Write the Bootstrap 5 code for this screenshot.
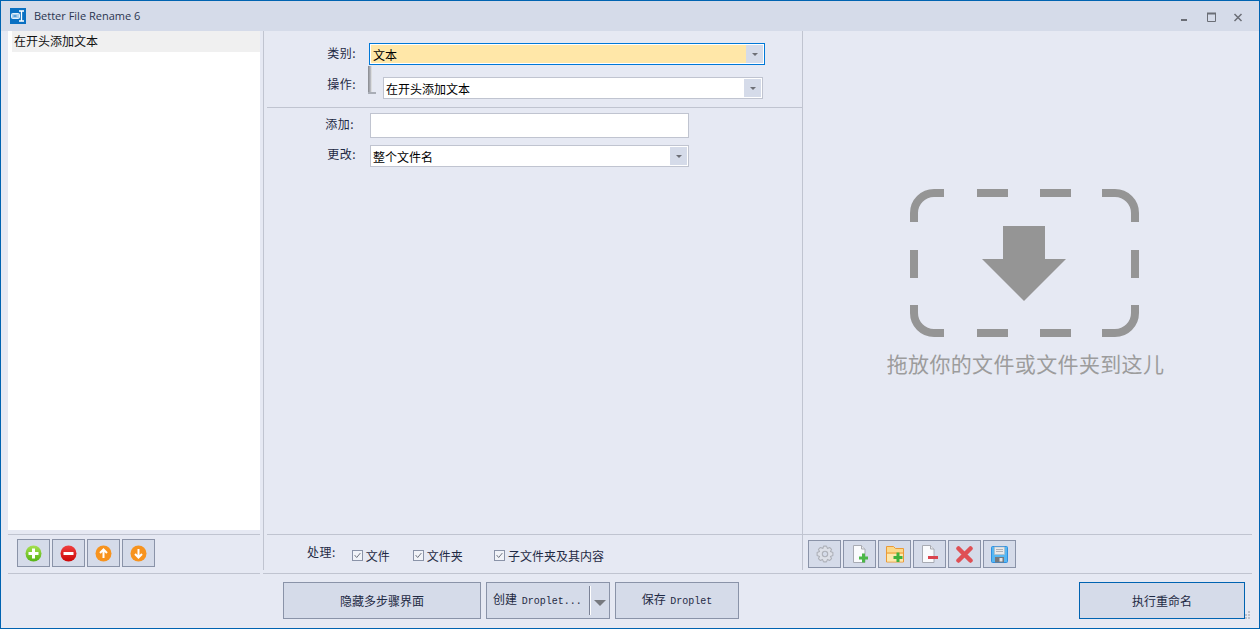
<!DOCTYPE html>
<html lang="zh-CN">
<head>
<meta charset="utf-8">
<title>Better File Rename 6</title>
<link rel="stylesheet" href="https://cdn.jsdelivr.net/npm/bootstrap@5.3.0/dist/css/bootstrap.min.css">
<style>
html,body{height:100%;margin:0;overflow:hidden;background:#e6e9f3}
body{font-family:"Noto Sans CJK SC","Liberation Sans",sans-serif;font-size:12px;line-height:16px;color:#1f2a44}
.win{height:629px;border:1px solid #0063b1;background:#e6e9f3}
.ttl{height:30px;background:#d5dbe9;flex:none}
.ttl-logo{margin-left:9px;display:block}
.ttl-name{margin-left:8px;font-family:"Open Sans","Liberation Sans",sans-serif;font-size:11px;color:#2b3550;margin-top:-1px}
.wctl{margin-right:16px;margin-top:4px}
.work{height:543px;flex:none}
.lp{width:252px;margin-left:7px;flex:none}
.fl{height:499px;background:#fff;padding-left:4px;color:#111}
.fl-sel{height:21px;background:#f0f0f0;padding-left:2px;padding-top:2px}
.hr-a{height:1px;background:#c0c4d0;flex:none}
.gapline{margin-top:4px}
.lbar{margin:4px 0 0 9px;gap:2px;height:28px}
.lp-end{margin-top:6px}
.rw{margin-left:3px;flex:1 1 auto;min-width:0}
.mid{width:540px;height:539px;border-left:1px solid #c0c4d0;border-right:1px solid #c0c4d0;padding-left:3px;flex:none}
.rp{flex:1 1 auto;height:539px;margin-right:7px}
.fr{display:flex;align-items:flex-start}
.flbl{width:89px;text-align:right;flex:none;padding-right:0;letter-spacing:.5px}
.cb{background:#fff;border:1px solid #c0c4d0;flex:none;position:relative;color:#000;padding:3px 0 0 2px;display:block}
.cb-arrow{position:absolute;top:1px;right:1px;bottom:1px;width:17px;background:#d5dbe9;display:flex;align-items:center;justify-content:center}
.cb-arrow i{display:block;width:0;height:0;border-left:3px solid transparent;border-right:3px solid transparent;border-top:3px solid #6d6f76;margin-top:1px}
.r1{margin-top:12px}.r1 .flbl{margin-top:2px}
.sel-cat{width:396px;height:22px;margin-left:13px;border-color:#0078d7;background:#fff;padding:0}
.sel-cat .fill{display:block;height:18px;margin:1px 18px 1px 1px;background:#ffe7a8;padding:2px 0 0 2px}
.r2{margin-top:12px}.r2 .flbl{margin-top:-1px}
.conn{width:8px;height:28px;margin:-11px 7px 0 12px;flex:none;border-bottom:2px solid #a9adb6;position:relative}
.conn::before{content:"";display:block;width:4px;height:100%;background:linear-gradient(90deg,#85878d,#b5b7bd 60%,#eceded)}
.sel-op{width:380px;height:22px}
.sep-in{margin-top:8px}
.r3{margin-top:5px}.r3 .flbl{margin-top:3px;padding-right:2px}
.inp-add{width:319px;height:25px;margin-left:14px}
.r4{margin-top:7px}.r4 .flbl{margin-top:1px}
.sel-ch{width:319px;height:22px;margin-left:14px}
.chk-row{height:35px;padding-left:40px;padding-top:4px;flex:none}
.chk-lab{margin-top:-5px;letter-spacing:.5px}
.ck{width:11px;height:11px;border:1px solid #8a93a8;background:#f1f3f8;display:block;flex:none}
.chk-i{display:flex;align-items:center;gap:3px;color:#1f2a44;margin-bottom:0;margin-top:2px}
.tbtn{width:33px;height:28px;background:#d5dbe9;border:1px solid #8a93a8;border-radius:0;padding:0;display:flex;align-items:center;justify-content:center;flex:none}
.drop-z{flex:1 1 auto;padding-right:7px}
.drop-t{font-size:21px;line-height:28px;color:#9c9c9c;letter-spacing:.36px;margin-top:12px;margin-left:3px;font-weight:400}
.rbar{margin:5px 0 2px 5px;gap:2px}
.bot{height:54px;padding-top:8px;flex:none}
.bbtn{height:37px;background:#d5dbe9;border:1px solid #8a93a8;border-radius:0;color:#1f2a44;font-size:12px;line-height:16px;padding:0;display:flex;align-items:center;justify-content:center}
.mono{font-family:"Liberation Mono",monospace;font-size:10px;margin-left:2px}
.b-hide{width:198px;margin-left:282px}
.b-drop{width:124px;margin-left:5px;justify-content:flex-start;padding-left:6px;position:relative}
.b-save{width:124px;margin-left:5px}
.dsplit{position:absolute;left:102px;top:3px;bottom:3px;width:2px;background:linear-gradient(90deg,#7b8296 50%,#fff 50%)}
.darrow{position:absolute;left:107px;top:17px;width:0;height:0;border-left:6px solid transparent;border-right:6px solid transparent;border-top:6px solid #77797f}
.b-run{width:166px;margin-left:auto;border-color:#0063b1}
.grip{display:block;margin:29px 9px 0 0;flex:none}
</style>
</head>
<body>
<div class="win d-flex flex-column">
  <div class="ttl d-flex align-items-center">
    <svg class="ttl-logo" width="16" height="16" viewBox="0 0 16 16"><rect width="16" height="16" fill="#0a70c2"/><rect x="1.500" y="5.500" width="8" height="5" rx="1" fill="#a9cfee" stroke="#e4f0fa"/><path d="M3.500 8h3" stroke="#0a70c2"/><path d="M9 3h5M9 13h5M11.500 3v10" stroke="#fff" stroke-width="1.300" fill="none"/></svg>
    <span class="ttl-name">Better File Rename 6</span>
    <div class="wctl ms-auto d-flex align-items-center">
      <svg width="76" height="12" viewBox="0 0 76 12"><rect x="14" y="7" width="6" height="2" fill="#6b6e76"/><path d="M40.500 1.500h8v8h-8z" fill="none" stroke="#6b6e76"/><path d="M40 1.500h9" stroke="#6b6e76" stroke-width="2"/><path d="M67.500 2l7 7M74.500 2l-7 7" stroke="#6b6e76" stroke-width="1.500"/></svg>
    </div>
  </div>
  <div class="work d-flex">
    <div class="lp d-flex flex-column">
      <div class="fl"><div class="fl-sel">在开头添加文本</div></div>
      <div class="hr-a gapline"></div>
      <div class="lbar d-flex">
        <button class="tbtn" type="button"><svg width="17" height="17" viewBox="0 0 17 17"><defs><linearGradient id="gg" x1="0" y1="0" x2="0" y2="1"><stop offset="0" stop-color="#a6e04f"/><stop offset="1" stop-color="#56b416"/></linearGradient></defs><circle cx="8.500" cy="8.500" r="8" fill="url(#gg)"/><path d="M8.500 3.500v10M3.500 8.500h10" stroke="#fff" stroke-width="3"/></svg></button>
        <button class="tbtn" type="button"><svg width="17" height="17" viewBox="0 0 17 17"><defs><linearGradient id="gr" x1="0" y1="0" x2="0" y2="1"><stop offset="0" stop-color="#f04040"/><stop offset="1" stop-color="#cc0606"/></linearGradient></defs><circle cx="8.500" cy="8.500" r="8" fill="url(#gr)"/><path d="M3.500 8.500h10" stroke="#fff" stroke-width="3"/></svg></button>
        <button class="tbtn" type="button"><svg width="17" height="17" viewBox="0 0 17 17"><circle cx="8.500" cy="8.500" r="8" fill="#f7931e"/><path d="M8.500 13V5M5 8l3.500-3.500L12 8" stroke="#fff" stroke-width="2" fill="none"/></svg></button>
        <button class="tbtn" type="button"><svg width="17" height="17" viewBox="0 0 17 17"><circle cx="8.500" cy="8.500" r="8" fill="#f7931e"/><path d="M8.500 4v8M5 9l3.500 3.500L12 9" stroke="#fff" stroke-width="2" fill="none"/></svg></button>
      </div>
      <div class="hr-a lp-end"></div>
    </div>
    <div class="rw d-flex flex-column">
      <div class="d-flex">
        <div class="mid d-flex flex-column">
          <div class="fr r1">
            <span class="flbl">类别:</span>
            <div class="cb sel-cat"><span class="fill">文本</span><span class="cb-arrow"><i></i></span></div>
          </div>
          <div class="fr r2">
            <span class="flbl">操作:</span>
            <span class="conn"></span>
            <div class="cb sel-op">在开头添加文本<span class="cb-arrow"><i></i></span></div>
          </div>
          <div class="hr-a sep-in"></div>
          <div class="fr r3">
            <span class="flbl">添加:</span>
            <div class="cb inp-add"></div>
          </div>
          <div class="fr r4">
            <span class="flbl">更改:</span>
            <div class="cb sel-ch">整个文件名<span class="cb-arrow"><i></i></span></div>
          </div>
          <div class="hr-a mt-auto"></div>
          <div class="chk-row d-flex align-items-center">
            <span class="chk-lab">处理:</span>
            <label class="chk-i" style="margin-left:16px"><svg class="ck" viewBox="0 0 11 11"><path d="M2 5l2.500 3L9 2.500" stroke="#6e7380" stroke-width="1.200" fill="none"/></svg>文件</label>
            <label class="chk-i" style="margin-left:23px"><svg class="ck" viewBox="0 0 11 11"><path d="M2 5l2.500 3L9 2.500" stroke="#6e7380" stroke-width="1.200" fill="none"/></svg>文件夹</label>
            <label class="chk-i" style="margin-left:31px"><svg class="ck" viewBox="0 0 11 11"><path d="M2 5l2.500 3L9 2.500" stroke="#6e7380" stroke-width="1.200" fill="none"/></svg>子文件夹及其内容</label>
          </div>
        </div>
        <div class="rp d-flex flex-column">
          <div class="drop-z d-flex flex-column align-items-center justify-content-center">
            <svg width="229" height="148" viewBox="0 0 229 148">
              <g fill="none" stroke="#959595" stroke-width="8">
                <path d="M34 4H24A20 20 0 0 0 4 24V33"/><path d="M67 4H98"/><path d="M130 4H161"/><path d="M192 4H205A20 20 0 0 1 225 24V33"/>
                <path d="M4 61V89"/><path d="M225 61V89"/>
                <path d="M4 116V124A20 20 0 0 0 24 144H34"/><path d="M67 144H98"/><path d="M130 144H161"/><path d="M192 144H205A20 20 0 0 0 225 124V116"/>
              </g>
              <path d="M93 37H135V70H156L114 112L72 70H93Z" fill="#959595"/>
            </svg>
            <div class="drop-t">拖放你的文件或文件夹到这儿</div>
          </div>
          <div class="hr-a"></div>
          <div class="rbar d-flex">
            <button class="tbtn" type="button"><svg width="18" height="18" viewBox="-9 -9 18 18"><path d="M-2.050-5.640L-1.390-7.880H1.390L2.540-5.440L4.590-6.550L6.550-4.590L5.440-2.540L7.880-1.390V1.390L5.440 2.540L6.550 4.590L4.590 6.550L2.540 5.440L1.390 7.880H-1.390L-2.540 5.440L-4.590 6.550L-6.550 4.590L-5.440 2.540L-7.880 1.390V-1.390L-5.440-2.540L-6.550-4.590L-4.590-6.550Z" fill="#dde0e8" stroke="#aeb1b9" stroke-width="1.100" stroke-linejoin="round"/><circle r="2.700" fill="#d5dbe9" stroke="#aeb1b9" stroke-width="1.100"/></svg></button>
            <button class="tbtn" type="button"><svg width="18" height="18" viewBox="0 0 18 18"><path d="M2.500 .5h8l3.500 3.500v13.500h-11.500z" fill="#fafbfd" stroke="#a8abb3"/><path d="M10.500 .5v3.500h3.500" fill="#e6e8ec" stroke="#a8abb3"/><path d="M12.500 8.500v9M8 13h9" stroke="#4bb848" stroke-width="3"/></svg></button>
            <button class="tbtn" type="button"><svg width="18" height="18" viewBox="0 0 18 18"><path d="M.5 1.500h7l2 2h8v13.500h-17z" fill="#fbd98a" stroke="#eb9a37"/><path d="M.5 8h17" stroke="#eb9a37"/><path d="M1 9h16v7.500H1z" fill="#fde8ae"/><path d="M12 7.500v9.500M7.500 12.500h9" stroke="#3fb23c" stroke-width="3"/></svg></button>
            <button class="tbtn" type="button"><svg width="18" height="18" viewBox="0 0 18 18"><path d="M1.500 .5h8l3.500 3.500v13.500h-11.500z" fill="#fafbfd" stroke="#a8abb3"/><path d="M9.500 .5v3.500h3.500" fill="#e6e8ec" stroke="#a8abb3"/><rect x="7" y="11" width="10" height="3" fill="#d9434e"/></svg></button>
            <button class="tbtn" type="button"><svg width="17" height="17" viewBox="0 0 17 17"><path d="M2.500 2.500L14.500 14.500M14.500 2.500L2.500 14.500" stroke="#df5055" stroke-width="4.500" stroke-linecap="round"/></svg></button>
            <button class="tbtn" type="button"><svg width="17" height="17" viewBox="0 0 17 17"><rect x=".5" y=".5" width="16" height="16" rx="1" fill="#57b7f2" stroke="#2f8fe0"/><rect x="3.500" y="1" width="10" height="7.500" fill="#e9e9ea" stroke="#b5b7bb" stroke-width=".6"/><path d="M5 3.500h7M5 5.500h7" stroke="#aeb0b5"/><rect x="4" y="11" width="9" height="5.500" fill="#77797d"/><rect x="8.500" y="12" width="3" height="3.500" fill="#e4e4e4"/></svg></button>
          </div>
        </div>
      </div>
      <div class="hr-a" style="margin:3px 7px 0 0"></div>
    </div>
  </div>
  <div class="bot d-flex">
    <button class="bbtn b-hide" type="button">隐藏多步骤界面</button>
    <button class="bbtn b-drop" type="button"><span>创建 <span class="mono">Droplet...</span></span><span class="dsplit"></span><span class="darrow"></span></button>
    <button class="bbtn b-save" type="button"><span>保存 <span class="mono">Droplet</span></span></button>
    <button class="bbtn b-run" type="button">执行重命名</button>
    <svg class="grip" width="5" height="8" viewBox="0 0 5 8"><g fill="#bfc2ca"><rect x="3" y="0" width="2" height="2"/><rect x="0" y="3" width="2" height="2"/><rect x="3" y="3" width="2" height="2"/><rect x="0" y="6" width="2" height="2"/><rect x="3" y="6" width="2" height="2"/></g></svg>
  </div>
</div>
</body>
</html>
